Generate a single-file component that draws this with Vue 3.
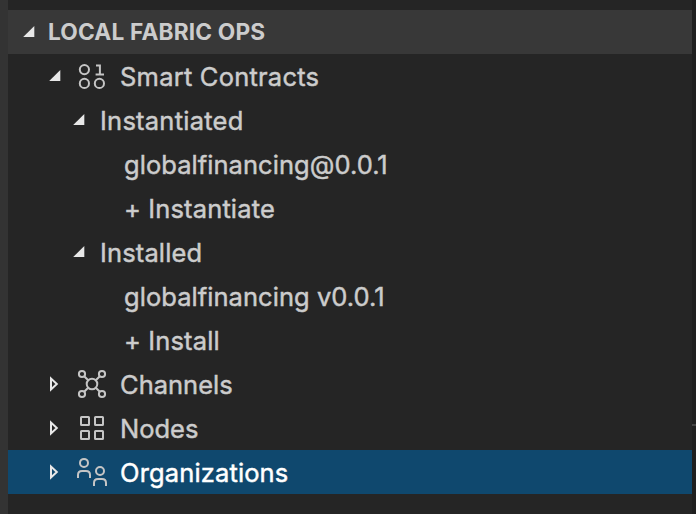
<script setup>
const rows = [
  { label: 'Smart Contracts', level: 'root', state: 'open', icon: 'contracts', fit: 'smart' },
  { label: 'Instantiated', level: 'group', state: 'open', fit: 'instantiated' },
  { label: 'globalfinancing@0.0.1', level: 'leaf', fit: 'package' },
  { label: '+ Instantiate', level: 'leaf', fit: 'action' },
  { label: 'Installed', level: 'group', state: 'open', fit: 'action' },
  { label: 'globalfinancing v0.0.1', level: 'leaf', fit: 'package' },
  { label: '+ Install', level: 'leaf', fit: 'action' },
  { label: 'Channels', level: 'root', state: 'closed', icon: 'channels' },
  { label: 'Nodes', level: 'root', state: 'closed', icon: 'nodes' },
  { label: 'Organizations', level: 'root', state: 'closed', icon: 'orgs', fit: 'action', selected: true },
]
</script>

<template>
  <div class="window">
    <div class="edge-left"></div>
    <main class="panel">
      <header class="header">
        <svg class="twistie" viewBox="0 0 12 16"><path class="solid" d="M11.3 2v11H.2z" /></svg>
        <h1 class="title">LOCAL FABRIC OPS</h1>
      </header>
      <ul class="tree">
        <li v-for="row in rows" :key="row.label" class="row" :class="[row.level, { selected: row.selected }]">
          <svg v-if="row.state === 'open'" class="twistie" viewBox="0 0 12 16"><path class="solid" d="M11.3 2v11H.2z" /></svg>
          <svg v-if="row.state === 'closed'" class="twistie" viewBox="0 0 12 16"><path class="hollow" d="M2 2.6v10.8L7.8 8z" /></svg>
          <svg v-if="row.icon" class="icon" viewBox="0 0 32 32">
            <g v-if="row.icon === 'contracts'">
              <circle cx="8.4" cy="9.6" r="4.6" />
              <circle cx="8.4" cy="23.4" r="4.6" />
              <circle cx="23.4" cy="23.4" r="4.6" />
              <path d="M20 5.6h3.9v8.8M19.6 14.4h8.4" />
            </g>
            <g v-else-if="row.icon === 'channels'">
              <circle cx="16" cy="16" r="5.3" />
              <circle cx="6" cy="6" r="3.1" />
              <circle cx="26" cy="6" r="3.1" />
              <circle cx="6" cy="26" r="3.1" />
              <circle cx="26" cy="26" r="3.1" />
              <path d="M8.2 8.2l4 4M23.8 8.2l-4 4M8.2 23.8l4-4M23.8 23.8l-4-4" />
            </g>
            <g v-else-if="row.icon === 'nodes'">
              <rect x="5" y="5" width="8" height="8" rx=".5" />
              <rect x="19" y="5" width="8" height="8" rx=".5" />
              <rect x="5" y="19" width="8" height="8" rx=".5" />
              <rect x="19" y="19" width="8" height="8" rx=".5" />
            </g>
            <g v-else>
              <circle cx="8" cy="6.9" r="4" />
              <path d="M2 22v-3q0-4 4-4h4q4 0 4 4v3" />
              <circle cx="24" cy="15" r="4" />
              <path d="M18 30v-3q0-4 4-4h4q4 0 4 4v3" />
            </g>
          </svg>
          <span class="label" :class="row.fit">{{ row.label }}</span>
        </li>
      </ul>
    </main>
    <div class="edge-right"><span class="tick"></span></div>
  </div>
</template>

<style>
body {
  margin: 0;
  background: #252525;
}
</style>

<style scoped>
.window {
  display: flex;
  width: 696px;
  height: 514px;
  overflow: hidden;
  background: #252525;
  color: #cccccc;
  font-family: Inter, "Liberation Sans", sans-serif;
}
.edge-left {
  width: 8px;
  background: #333333;
}
.panel {
  flex: 1;
  padding-top: 10px;
}
.edge-right {
  display: flex;
  flex-direction: column;
  width: 4px;
  padding-top: 424px;
  box-sizing: border-box;
  background: #1f1f1f;
}
.tick {
  height: 2px;
  background: #434343;
}
.header {
  display: flex;
  align-items: center;
  height: 44px;
  padding-left: 15px;
  background: #383838;
}
.title {
  margin: 0 0 0 13px;
  font-size: 22.7px;
  font-weight: 700;
  line-height: 44px;
  letter-spacing: 0.17px;
  white-space: pre;
}
.tree {
  margin: 0;
  padding: 0;
  list-style: none;
}
.row {
  display: flex;
  align-items: center;
  height: 44px;
}
.root { padding-left: 41px; }
.group { padding-left: 65px; }
.leaf { padding-left: 116px; }
.selected {
  background: #0f486e;
  color: #ffffff;
}
.twistie {
  flex: none;
  width: 12px;
  height: 16px;
}
.row .twistie { margin-top: -1px; }
.solid { fill: #e8e8e8; }
.hollow {
  fill: none;
  stroke: #e8e8e8;
  stroke-width: 2;
}
.icon {
  flex: none;
  width: 32px;
  height: 32px;
  margin: 0 12px 0 15px;
  fill: none;
  stroke: #c5c5c5;
  stroke-width: 2;
}
.label {
  padding-top: 2px;
  font-size: 25.5px;
  line-height: 42px;
  white-space: pre;
  -webkit-text-stroke: 0.45px currentColor;
}
.group .label { margin-left: 15px; }
.smart { letter-spacing: 0.22px; }
.instantiated { letter-spacing: 0.24px; }
.package { letter-spacing: 0.05px; }
.action { letter-spacing: 0.14px; }
</style>
